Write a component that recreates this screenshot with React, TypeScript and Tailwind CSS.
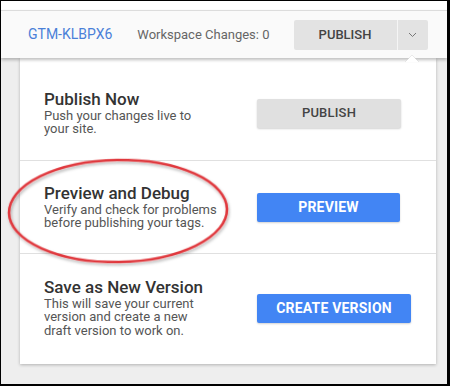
import React from "react";

const font = { fontFamily: "Roboto, 'Noto Sans', sans-serif" };

function Section({
  title,
  lines,
  button,
  primary,
  btnWidth,
  className,
}: {
  title: string;
  lines: string[];
  button: string;
  primary?: boolean;
  btnWidth: string;
  className: string;
}) {
  return (
    <div className={`flex items-center pl-[24px] ${className}`}>
      <div className="w-[213px] shrink-0">
        <div className="text-[17px] leading-[17px] font-medium text-[#333]">{title}</div>
        <div className="text-[13px] leading-[13.5px] text-[#555] mt-[1px]">
          {lines.map((l, i) => (
            <div key={i}>{l}</div>
          ))}
        </div>
      </div>
      <button
        className={`${btnWidth} h-[29px] rounded-[2px] shadow-[0_1px_2px_rgba(0,0,0,0.18)] ${
          primary
            ? "bg-[#4285f4] text-white font-bold text-[14px]"
            : "bg-[#e0e0e0] text-[#444] font-medium text-[13px]"
        } tracking-[0.2px]`}
      >
        {button}
      </button>
    </div>
  );
}

export default function App() {
  return (
    <div
      style={font}
      className="relative w-[450px] h-[386px] border-l border-t border-r-[3px] border-b-[2px] border-black bg-[#eeeeee] overflow-hidden flex flex-col"
    >
      <div className="h-[9px] bg-white shrink-0" />
      <div className="relative z-10 h-[48px] shrink-0 bg-[#fafafa] border-t border-[#dcdcdc] shadow-[0_2px_3px_rgba(0,0,0,0.25)] flex items-center pl-[27px]">
        <span className="text-[14px] text-[#4a80d8]">GTM-KLBPX6</span>
        <span className="ml-[25px] text-[13px] text-[#666]">Workspace Changes: 0</span>
        <div className="ml-[24px] flex h-[30px]">
          <button className="w-[103px] h-[30px] bg-[#e3e3e3] rounded-l-[2px] text-[13px] font-medium text-[#444]">
            PUBLISH
          </button>
          <div className="w-[1px] bg-[#f5f5f5]" />
          <button className="w-[30px] h-[30px] bg-[#e3e3e3] rounded-r-[2px] flex items-center justify-center">
            <svg width="9" height="6" viewBox="0 0 9 6">
              <path d="M1 1 L4.5 4.5 L8 1" fill="none" stroke="#777" strokeWidth="1" />
            </svg>
          </button>
        </div>
      </div>
      <div className="flex-1 flex pl-[19px]">
        <div className="w-[416px] h-[306px] bg-white shadow-[0_1px_3px_rgba(0,0,0,0.25)] flex flex-col">
          <Section
            className="h-[102px] pt-[8px]"
            title="Publish Now"
            lines={["Push your changes live to", "your site."]}
            button="PUBLISH"
            btnWidth="w-[144px]"
          />
          <Section
            className="h-[93px] border-t border-[#e0e0e0]"
            title="Preview and Debug"
            lines={["Verify and check for problems", "before publishing your tags."]}
            button="PREVIEW"
            primary
            btnWidth="w-[143px]"
          />
          <Section
            className="h-[111px] border-t border-[#e0e0e0] pb-[2px]"
            title="Save as New Version"
            lines={["This will save your current", "version and create a new", "draft version to work on."]}
            button="CREATE VERSION"
            primary
            btnWidth="w-[154px]"
          />
        </div>
        <div className="flex-1" />
      </div>
      <svg className="absolute left-[402px] top-[52px] z-20" width="20" height="9" viewBox="0 0 20 9">
        <path d="M2 9 L9 2 L16 9 Z" fill="#ffffff" />
        <path d="M2 9 L9 2 L16 9" fill="none" stroke="rgba(0,0,0,0.08)" strokeWidth="1" />
      </svg>
      <svg className="absolute left-0 top-0 z-30 pointer-events-none" width="450" height="386">
        <defs>
          <filter id="sh" x="-10%" y="-10%" width="120%" height="130%">
            <feDropShadow dx="1" dy="2" stdDeviation="1.5" floodColor="#000" floodOpacity="0.3" />
          </filter>
        </defs>
        <ellipse
          cx="117"
          cy="210"
          rx="109"
          ry="51"
          fill="none"
          stroke="#e0393e"
          strokeWidth="2.6"
          filter="url(#sh)"
          transform="rotate(-1 117 210)"
        />
      </svg>
    </div>
  );
}
